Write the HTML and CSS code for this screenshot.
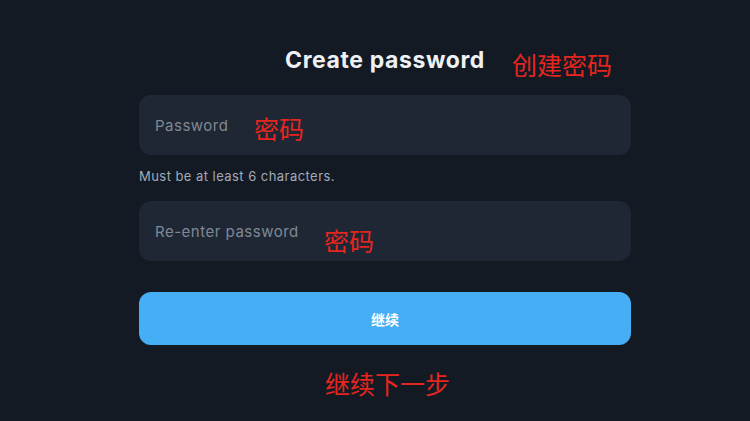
FILE: index.html
```html
<!DOCTYPE html>
<html>
    <head>
        <title>Create password</title>
        <link rel="stylesheet" href="styles.css">
    </head>
    <body>
        <div class="page">
            <div class="form-box">
                <h2 class="title">Create password</h2>
                <input class="field" type="password" placeholder="Password">
                <p class="hint">Must be at least 6 characters.</p>
                <input class="field field-2" type="password" placeholder="Re-enter password">
                <button class="next-btn">继续</button>
            </div>

            <!-- red notes on top of the screen -->
            <span class="note note-title">创建密码</span>
            <span class="note note-pass">密码</span>
            <span class="note note-repass">密码</span>
            <span class="note note-btn">继续下一步</span>
        </div>
    </body>
</html>
```

FILE: styles.css
```css
html, body{
    margin: 0;
    padding: 0;
    background: #131a24;
}
.page{
    position: relative;
    width: 750px;
    height: 421px;
    overflow: hidden;
    font-family: Inter, "Noto Sans", "Noto Sans CJK SC", sans-serif;
}
.form-box{
    width: 492px;
    margin-left: 139px;
    padding-top: 44px;
    display: flex;
    flex-direction: column;
}
.title{
    margin: 0;
    height: 32px;
    line-height: 32px;
    font-size: 23px;
    font-weight: 700;
    color: #eef1f4;
    text-align: center;
    letter-spacing: 0.6px;
}
.field{
    margin-top: 19px;
    height: 60px;
    box-sizing: border-box;
    border: none;
    outline: none;
    border-radius: 12px;
    background: #1f2734;
    padding: 0 16px;
    font-family: inherit;
    font-size: 15px;
    letter-spacing: 0.5px;
    color: #dfe3e8;
}
.field::placeholder{
    color: #7f8896;
}
.field-2{
    margin-top: 16px;
}
.hint{
    margin: 12px 0 0 0;
    height: 18px;
    line-height: 18px;
    font-size: 13px;
    letter-spacing: 0.45px;
    color: #a3abb7;
}
.next-btn{
    margin-top: 31px;
    height: 53px;
    border: none;
    border-radius: 12px;
    background: #46aef5;
    color: #fff;
    font-family: "Noto Sans CJK SC", sans-serif;
    font-size: 14px;
    font-weight: 700;
}
.note{
    position: absolute;
    font-family: "Noto Sans CJK SC", sans-serif;
    font-size: 25px;
    line-height: 26px;
    color: #e5261f;
    white-space: nowrap;
}
.note-title{
    left: 512px;
    top: 51px;
}
.note-pass{
    left: 254px;
    top: 115px;
}
.note-repass{
    left: 324px;
    top: 227px;
}
.note-btn{
    left: 325px;
    top: 370px;
}
```
